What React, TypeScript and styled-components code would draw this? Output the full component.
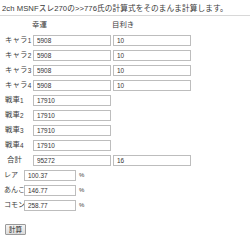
import React from 'react';
import styled, { createGlobalStyle } from 'styled-components';

const GlobalStyle = createGlobalStyle`
  html, body {
    margin: 0;
    padding: 0;
    background: #ffffff;
  }
  body {
    font-family: 'Liberation Sans', 'Noto Sans CJK JP', sans-serif;
    color: #3a3a3a;
  }
`;

type Row = { label: string; num: string; luck: string; eye?: string };

const mainRows: Row[] = [
  { label: 'キャラ', num: '1', luck: '5908', eye: '10' },
  { label: 'キャラ', num: '2', luck: '5908', eye: '10' },
  { label: 'キャラ', num: '3', luck: '5908', eye: '10' },
  { label: 'キャラ', num: '4', luck: '5908', eye: '10' },
  { label: '戦車', num: '1', luck: '17910' },
  { label: '戦車', num: '2', luck: '17910' },
  { label: '戦車', num: '3', luck: '17910' },
  { label: '戦車', num: '4', luck: '17910' },
];

const rates = [
  { label: 'レア', value: '100.37' },
  { label: 'あんこ', value: '146.77' },
  { label: 'コモン', value: '258.77' },
];

export default function App() {
  return (
    <Page>
      <GlobalStyle />
      <Title>2ch MSNFスレ270の&gt;&gt;776氏の計算式をそのまんま計算します。</Title>

      <MainGrid>
        <span />
        <Head>幸運</Head>
        <Head>目利き</Head>

        {mainRows.map((r, i) => (
          <React.Fragment key={i}>
            <Label>
              {r.label}
              <Num>{r.num}</Num>
            </Label>
            <Field defaultValue={r.luck} />
            {r.eye !== undefined ? <Field defaultValue={r.eye} /> : <span />}
          </React.Fragment>
        ))}

        <Label $indent>合計</Label>
        <Field defaultValue="95272" />
        <Field defaultValue="16" />
      </MainGrid>

      <RateGrid>
        {rates.map((r) => (
          <React.Fragment key={r.label}>
            <Label $small>{r.label}</Label>
            <RateField defaultValue={r.value} />
            <Unit>%</Unit>
          </React.Fragment>
        ))}
      </RateGrid>

      <Footer>
        <CalcButton type="button">計算</CalcButton>
      </Footer>
    </Page>
  );
}

// ------------------------------------------------------------------------------------------------

const Page = styled.div`
  width: 250px;
  height: 242px;
  overflow: hidden;
`;

const Title = styled.div`
  padding: 2px 0 0 2px;
  height: 13px;
  line-height: 13px;
  font-size: 7.7px;
  white-space: nowrap;
  border-bottom: 1px solid #d8d8d8;
  letter-spacing: 0.05px;
`;

const MainGrid = styled.div`
  display: grid;
  grid-template-columns: 31px 78px 78px;
  grid-auto-rows: 10px;
  column-gap: 2px;
  row-gap: 5px;
  padding-top: 4px;
`;

const Head = styled.div`
  font-size: 7.4px;
  line-height: 10px;
  margin-left: -1px;
  white-space: nowrap;
`;

const Label = styled.div<{ $indent?: boolean; $small?: boolean }>`
  font-size: ${({ $small }) => ($small ? '7px' : '7.4px')};
  line-height: 10px;
  padding-left: ${({ $indent, $small }) => ($indent ? '7px' : $small ? '4px' : '5px')};
  white-space: nowrap;
  letter-spacing: ${({ $small }) => ($small ? '0' : '0.15px')};
`;

const Num = styled.span`
  font-size: 6.4px;
  position: relative;
  top: 1px;
  letter-spacing: 0;
`;

const Field = styled.input`
  box-sizing: border-box;
  width: 100%;
  height: 11px;
  margin: 0;
  padding: 0 0 0 3px;
  border: 1px solid #bdbdbd;
  background: #ffffff;
  font-family: 'Liberation Sans', sans-serif;
  font-size: 6.4px;
  line-height: 9px;
  color: #333333;
  outline: none;
`;

const RateGrid = styled.div`
  display: grid;
  grid-template-columns: 24px 52px 20px;
  grid-auto-rows: 11px;
  column-gap: 0;
  row-gap: 4px;
  padding-top: 5px;
`;

const RateField = styled(Field)``;

const Unit = styled.div`
  font-size: 6px;
  line-height: 11px;
  padding-left: 3px;
`;

const Footer = styled.div`
  padding: 7px 0 0 5px;
`;

const CalcButton = styled.button`
  box-sizing: border-box;
  width: 21px;
  height: 11px;
  margin: 0;
  padding: 0;
  border: 1px solid #9a9a9a;
  border-radius: 1px;
  background: linear-gradient(#f4f4f4, #dcdcdc);
  font-family: 'Noto Sans CJK JP', sans-serif;
  font-size: 6.6px;
  line-height: 9px;
  color: #222222;
`;
